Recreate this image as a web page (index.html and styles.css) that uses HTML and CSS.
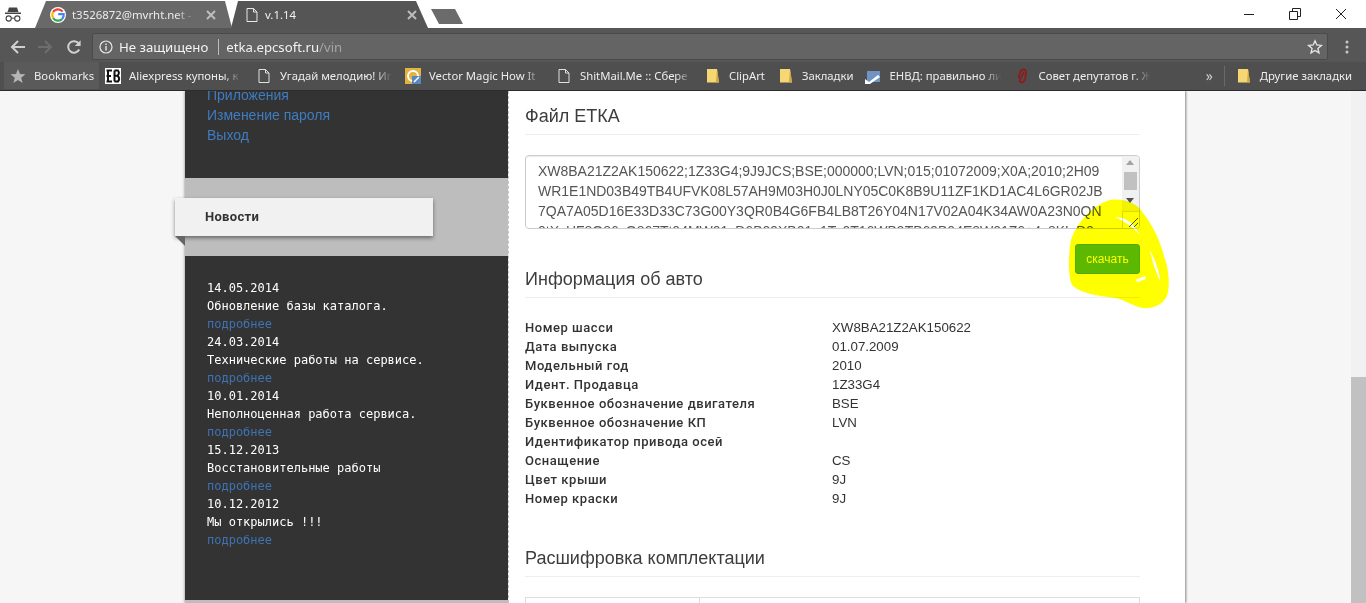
FILE: index.html
```html
<!DOCTYPE html>
<html lang="ru">
<head>
<meta charset="utf-8">
<title>v.1.14</title>
<link rel="stylesheet" href="styles.css">
</head>
<body>
<header class="chrome">
  <div class="tabstrip">
    <div class="incognito">
      <svg width="20" height="20" viewBox="0 0 20 20"><path d="M6 3.5 L14 3.5 L15.5 8 L4.5 8 Z" fill="#444"/><rect x="2" y="8.5" width="16" height="1.5" fill="#444"/><circle cx="5.7" cy="14.5" r="2.6" fill="none" stroke="#444" stroke-width="1.1"/><circle cx="14.3" cy="14.5" r="2.6" fill="none" stroke="#444" stroke-width="1.1"/><path d="M8.3 14.2 H11.7" stroke="#444"/></svg>
    </div>
    <div class="tab tab-back">
      <svg class="tab-ico" width="16" height="16" viewBox="0 0 16 16"><circle cx="8" cy="8" r="8" fill="#fff"/><path d="M12.6 4.6 A5.7 5.7 0 0 0 3.2 5" fill="none" stroke="#ea4335" stroke-width="2.2"/><path d="M3.2 5 A5.7 5.7 0 0 0 3.2 11" fill="none" stroke="#fbbc05" stroke-width="2.2"/><path d="M3.2 11 A5.7 5.7 0 0 0 12 12.1" fill="none" stroke="#34a853" stroke-width="2.2"/><path d="M12 12.1 A5.7 5.7 0 0 0 13.7 7.2 H8.2" fill="none" stroke="#4285f4" stroke-width="2.2"/></svg>
      <span class="tab-title">t3526872@mvrht.net - П</span>
      <svg class="tab-x" width="10" height="10" viewBox="0 0 10 10"><path d="M1 1 L9 9 M9 1 L1 9" stroke="#bdbdbd" stroke-width="2"/></svg>
    </div>
    <div class="tab tab-active">
      <svg class="tab-ico" width="16" height="16" viewBox="0 0 16 16"><path d="M3 1.5 H9.5 L13 5 V14.5 H3 Z M9.5 1.5 V5 H13" fill="none" stroke="#e8e8e8"/></svg>
      <span class="tab-title">v.1.14</span>
      <svg class="tab-x" width="10" height="10" viewBox="0 0 10 10"><path d="M1 1 L9 9 M9 1 L1 9" stroke="#bdbdbd" stroke-width="2"/></svg>
    </div>
    <div class="newtab"></div>
    <div class="winctl">
      <svg width="12" height="12" viewBox="0 0 12 12"><path d="M1 6.5 H11" stroke="#222"/></svg>
      <svg width="12" height="12" viewBox="0 0 12 12"><path d="M.5 3.5 H8.5 V11.5 H.5 Z M3.5 3.5 V.5 H11.5 V8.5 H8.5" fill="none" stroke="#222"/></svg>
      <svg width="12" height="12" viewBox="0 0 12 12"><path d="M1 1 L11 11 M11 1 L1 11" stroke="#222"/></svg>
    </div>
  </div>
  <div class="toolbar">
    <svg class="nav nav-back" width="16" height="16" viewBox="0 0 16 16"><path d="M15 8 H2 M8 2 L2 8 L8 14" fill="none" stroke="#d0d0d0" stroke-width="2"/></svg>
    <svg class="nav nav-fwd" width="16" height="16" viewBox="0 0 16 16"><path d="M1 8 H14 M8 2 L14 8 L8 14" fill="none" stroke="#6e6e6e" stroke-width="2"/></svg>
    <svg class="nav nav-rel" width="16" height="16" viewBox="0 0 16 16"><path d="M13.2 10.5 A5.8 5.8 0 1 1 12.6 4.4" fill="none" stroke="#d0d0d0" stroke-width="2"/><path d="M14.6 1.2 V7 H8.8 Z" fill="#d0d0d0"/></svg>
    <div class="omni">
      <svg class="info" width="14" height="14" viewBox="0 0 14 14"><circle cx="7" cy="7" r="6" fill="none" stroke="#e8e8e8" stroke-width="1.2"/><path d="M7 6 V10.5 M7 3.4 V5" stroke="#e8e8e8" stroke-width="1.4"/></svg>
      <span class="insecure">Не защищено</span>
      <span class="omni-sep"></span>
      <span class="url">etka.epcsoft.ru<span class="url-path">/vin</span></span>
      <svg class="omni-star" width="16" height="16" viewBox="0 0 16 16"><path d="M8 1.8 L9.8 6 L14.4 6.4 L10.9 9.4 L12 13.9 L8 11.5 L4 13.9 L5.1 9.4 L1.6 6.4 L6.2 6 Z" fill="none" stroke="#e8e8e8" stroke-width="1.3"/></svg>
    </div>
    <svg class="menu" width="4" height="14" viewBox="0 0 4 14"><circle cx="2" cy="2" r="1.5" fill="#c8c8c8"/><circle cx="2" cy="7" r="1.5" fill="#c8c8c8"/><circle cx="2" cy="12" r="1.5" fill="#c8c8c8"/></svg>
  </div>
  <nav class="bookmarks">
    <div class="bm-first">
      <svg width="16" height="16" viewBox="0 0 16 16"><path d="M8 1 L10 6 L15.4 6.3 L11.2 9.7 L12.6 15 L8 12 L3.4 15 L4.8 9.7 L.6 6.3 L6 6 Z" fill="#b5b5b5"/></svg>
      <span>Bookmarks</span>
    </div>
    <div class="bm">
      <svg width="16" height="16" viewBox="0 0 16 16"><rect width="16" height="16" fill="#fff"/><path d="M1.5 2.5 H7 M1.5 8 H6 M1.5 13.5 H7 M3 2.5 V13.5 M9.5 2.5 V13.5 M9.5 2.5 H13 Q15 5 12.5 7.8 H9.5 M12.5 7.8 Q15.5 10.5 13 13.5 H9.5" fill="none" stroke="#111" stroke-width="2"/></svg>
      <span class="bm-t">Aliexpress купоны, к</span>
    </div>
    <div class="bm">
      <svg width="16" height="16" viewBox="0 0 16 16"><path d="M3 1.5 H9.5 L13 5 V14.5 H3 Z M9.5 1.5 V5 H13" fill="none" stroke="#e0e0e0"/></svg>
      <span class="bm-t">Угадай мелодию! Иг</span>
    </div>
    <div class="bm">
      <svg width="16" height="16" viewBox="0 0 16 16"><rect width="16" height="16" fill="#e3b341"/><circle cx="8" cy="8" r="5" fill="none" stroke="#fff" stroke-width="2"/><path d="M7 8 H16 V16 H7 Z" fill="#5b87c0"/><path d="M9 14 L14 9" stroke="#fff" stroke-width="1.5"/></svg>
      <span class="bm-t">Vector Magic How It</span>
    </div>
    <div class="bm">
      <svg width="16" height="16" viewBox="0 0 16 16"><path d="M3 1.5 H9.5 L13 5 V14.5 H3 Z M9.5 1.5 V5 H13" fill="none" stroke="#e0e0e0"/></svg>
      <span class="bm-t">ShitMail.Me :: Сбере</span>
    </div>
    <div class="bm bm-auto">
      <svg width="16" height="16" viewBox="0 0 16 16"><path d="M2 1 H12 L14 14.5 H2 Z" fill="#f7d774"/><path d="M12 1 L14 14.5 H11 Z" fill="#cfa53e"/></svg>
      <span>ClipArt</span>
    </div>
    <div class="bm bm-auto">
      <svg width="16" height="16" viewBox="0 0 16 16"><path d="M2 1 H12 L14 14.5 H2 Z" fill="#f7d774"/><path d="M12 1 L14 14.5 H11 Z" fill="#cfa53e"/></svg>
      <span>Закладки</span>
    </div>
    <div class="bm bm-envd">
      <svg width="16" height="16" viewBox="0 0 16 16"><path d="M2 3 H15 V14 H2 Z" fill="#6f93c4"/><path d="M0 11 L4 14 L13 7 L15 9 L5 16 H0 Z" fill="#fff"/></svg>
      <span class="bm-t">ЕНВД: правильно ли</span>
    </div>
    <div class="bm bm-sovet">
      <svg width="16" height="16" viewBox="0 0 16 16"><path d="M10 4 L6 11.5 Q5 14 7.5 14.5 Q10 14.5 11 11 L12 5 Q12 1.5 9.5 1.5 Q7 1.5 6 5 L4.5 10" fill="none" stroke="#8c1c1c" stroke-width="1.8"/></svg>
      <span class="bm-t">Совет депутатов г. Ж</span>
    </div>
    <span class="bm-more">»</span>
    <span class="bm-sep"></span>
    <div class="bm bm-auto bm-other">
      <svg width="16" height="16" viewBox="0 0 16 16"><path d="M2 1 H12 L14 14.5 H2 Z" fill="#f7d774"/><path d="M12 1 L14 14.5 H11 Z" fill="#cfa53e"/></svg>
      <span>Другие закладки</span>
    </div>
  </nav>
</header>

<div class="viewport">
  <div class="page">
    <div class="container">
      <aside class="sidebar">
        <ul class="side-links">
          <li><a href="#">Приложения</a></li>
          <li><a href="#">Изменение пароля</a></li>
          <li><a href="#">Выход</a></li>
        </ul>
        <div class="band">
          <div class="ribbon">Новости</div>
        </div>
        <div class="news">
          <div>14.05.2014</div>
          <div>Обновление базы каталога.</div>
          <a href="#">подробнее</a>
          <div>24.03.2014</div>
          <div>Технические работы на сервисе.</div>
          <a href="#">подробнее</a>
          <div>10.01.2014</div>
          <div>Неполноценная работа сервиса.</div>
          <a href="#">подробнее</a>
          <div>15.12.2013</div>
          <div>Восстановительные работы</div>
          <a href="#">подробнее</a>
          <div>10.12.2012</div>
          <div>Мы открылись !!!</div>
          <a href="#">подробнее</a>
        </div>
        <div class="band-end"></div>
      </aside>
      <main class="content">
        <h3 class="title title-first">Файл ЕТКА</h3>
        <div class="filebox">
          <div class="filetext">XW8BA21Z2AK150622;1Z33G4;9J9JCS;BSE;000000;LVN;015;01072009;X0A;2010;2H09<br>WR1E1ND03B49TB4UFVK08L57AH9M03H0J0LNY05C0K8B9U11ZF1KD1AC4L6GR02JB<br>7QA7A05D16E33D33C73G00Y3QR0B4G6FB4LB8T26Y04N17V02A04K34AW0A23N0QN<br>0tXcHF8Q86cQ867Tt04MW01cD6B09XB01o1Ta0T16WB9TB69B04E8W01Z6+4c8KL D9</div>
          <div class="fbar">
            <span class="fbar-up"></span>
            <span class="fbar-thumb"></span>
            <span class="fbar-down"></span>
          </div>
          <div class="fgrip">
            <svg width="11" height="11" viewBox="0 0 11 11"><path d="M1 10 L10 1 M6 10 L10 6" stroke="#555"/></svg>
          </div>
        </div>
        <div class="dl-row"><button class="dl-btn" type="button">скачать</button></div>
        <h3 class="title">Информация об авто</h3>
        <dl class="facts">
          <div class="fact"><dt>Номер шасси</dt><dd>XW8BA21Z2AK150622</dd></div>
          <div class="fact"><dt>Дата выпуска</dt><dd>01.07.2009</dd></div>
          <div class="fact"><dt>Модельный год</dt><dd>2010</dd></div>
          <div class="fact"><dt>Идент. Продавца</dt><dd>1Z33G4</dd></div>
          <div class="fact"><dt>Буквенное обозначение двигателя</dt><dd>BSE</dd></div>
          <div class="fact"><dt>Буквенное обозначение КП</dt><dd>LVN</dd></div>
          <div class="fact"><dt>Идентификатор привода осей</dt><dd></dd></div>
          <div class="fact"><dt>Оснащение</dt><dd>CS</dd></div>
          <div class="fact"><dt>Цвет крыши</dt><dd>9J</dd></div>
          <div class="fact"><dt>Номер краски</dt><dd>9J</dd></div>
        </dl>
        <h3 class="title title-spaced">Расшифровка комплектации</h3>
        <div class="equip"><div class="equip-a"></div><div class="equip-b"></div></div>
        <svg class="scribble" width="110" height="118" viewBox="1065 195 110 118">
          <path fill="#ffff00" fill-rule="evenodd" d="M1110 200 C1125 198 1138 204 1143 213 C1152 224 1160 240 1164 256 C1170 272 1170 290 1166 298 C1160 307 1148 310 1138 307 C1130 304 1124 300 1116 298 C1100 296 1082 294 1073 286 C1068 280 1068 255 1071 240 C1077 222 1094 204 1110 200 Z M1115 217 C1125 217 1133 222 1140 235 C1134 228 1126 222 1115 217 Z M1150 250 C1155 260 1160 272 1160 281 C1156 272 1152 262 1150 250 Z M1135 280 L1145 276 L1146 279 L1138 282 Z"/>
        </svg>
      </main>
    </div>
  </div>
  <div class="pagebar"><span class="pagebar-thumb"></span></div>
</div>
</body>
</html>
```
FILE: styles.css
```css
* { box-sizing: border-box; }
html, body { margin: 0; padding: 0; height: 603px; overflow: hidden; }
body { display: flex; flex-direction: column; font-family: "Liberation Sans", Arial, sans-serif; background: #fff; color: #333; }

.chrome { flex: 0 0 91px; display: flex; flex-direction: column; font-family: "Noto Sans", "Open Sans", sans-serif; font-size: 11.3px; }
.tabstrip { flex: 0 0 28px; display: flex; align-items: flex-end; background: #fff; }
.incognito { flex: 0 0 35px; align-self: stretch; display: flex; align-items: center; padding-left: 3px; }
.tab { height: 27px; flex: 0 0 auto; display: flex; align-items: center; position: relative; font-size: 11.4px; }
.tab-back { width: 197px; padding-left: 15px; background: #696969; color: #ececec; clip-path: polygon(0 100%, 11px 0, 190px 0, 197px 100%); }
.tab-active { width: 197px; margin-left: -1px; padding-left: 13px; background: #555; color: #f0f0f0; clip-path: polygon(0 100%, 7px 0, 185px 0, 197px 100%); }
.tab-ico { flex: none; margin-right: 5px; }
.tab-back .tab-ico { margin-right: 6px; }
.tab-back .tab-title { width: 126px; white-space: nowrap; -webkit-mask-image: linear-gradient(90deg, #000 82%, transparent 98%); mask-image: linear-gradient(90deg, #000 82%, transparent 98%); }
.tab-active .tab-title { width: 140px; }
.tab-back .tab-x { margin-left: 8px; }
.tab-active .tab-x { margin-left: 2px; }
.newtab { width: 32px; height: 15px; margin: 0 0 4px 3px; background: #6b6b6b; clip-path: polygon(0 0, 24px 0, 32px 100%, 8px 100%); }
.winctl { margin-left: auto; align-self: stretch; display: flex; align-items: center; gap: 34px; padding: 0 19px 1px 0; }

.toolbar { flex: 0 0 34px; display: flex; align-items: center; padding-top: 3px; background: #565656; position: relative; }
.nav { flex: none; }
.nav-back { margin-left: 10px; }
.nav-fwd { margin-left: 11px; }
.nav-rel { margin-left: 13px; }
.omni { width: 1236px; height: 27px; margin-left: 10px; display: flex; align-items: center; background: #646464; border: 1px solid #4a4a4a; border-radius: 2px; font-size: 13.2px; color: #f2f2f2; }
.info { margin-left: 6px; flex: none; }
.insecure { margin-left: 6px; white-space: nowrap; }
.omni-sep { width: 1px; height: 16px; margin: 0 7px 0 10px; background: #bcbcbc; }
.url { white-space: nowrap; }
.url-path { color: #a5a5a5; }
.omni-star { margin-left: auto; margin-right: 4px; flex: none; }
.menu { margin-left: 17px; flex: none; }

.bookmarks { flex: 0 0 29px; display: flex; align-items: center; padding-bottom: 1px; background: #4f4f4f; border-bottom: 1px solid #2c2c2c; color: #ededed; white-space: nowrap; }
.bm-first { width: 95px; height: 27px; margin-left: 4px; padding-left: 6px; display: flex; align-items: center; gap: 8px; background: #5a5a5a; }
.bm { display: flex; align-items: center; gap: 8px; width: 136px; margin-left: 15px; flex: none; }
.bm:nth-child(2) { margin-left: 6px; }
.bm:nth-child(4) { margin-left: 13px; }
.bm-envd { margin-left: 12px; }
.bm-sovet { margin-left: 13px; }
.bm-t { width: 112px; white-space: nowrap; -webkit-mask-image: linear-gradient(90deg, #000 85%, transparent); mask-image: linear-gradient(90deg, #000 85%, transparent); }
.bm-auto { width: auto; margin-left: 13px; }
.bm-more { margin-left: auto; font-size: 14px; line-height: 14px; color: #cfcfcf; width: 18px; }
.bm-sep { width: 1px; height: 20px; background: #6a6a6a; margin-left: 0; }
.bm-other { margin: 0 14px 0 11px; }

.viewport { flex: 1 1 auto; min-height: 0; display: flex; overflow: hidden; }
.page { flex: 1 1 auto; min-width: 0; background: #f6f6f6; padding-left: 185px; }
.pagebar { flex: 0 0 15px; background: #f1f1f1; padding-top: 286px; }
.pagebar-thumb { display: block; height: 226px; background: #c1c1c1; }

.container { width: 1000px; height: 512px; display: flex; box-shadow: 0 0 3px #888, 1px 0 2px #aaa; background: #fff; }

.sidebar { flex: 0 0 324px; background: #333; background-clip: padding-box; border-right: 1px dashed #c4c4c4; display: flex; flex-direction: column; }
.side-links { list-style: none; margin: -6px 0 0; padding: 0 0 33px 22px; font-size: 14px; line-height: 20px; }
.side-links a { color: #3f7cc0; text-decoration: none; }
.band { height: 78px; flex: none; background: #bdbdbd; padding-top: 20px; position: relative; }
.ribbon { width: 258px; height: 38px; margin-left: -10px; padding-left: 30px; line-height: 37px; background: #f1f1f1; box-shadow: 0 2px 4px rgba(0,0,0,.45); color: #333; font-size: 13px; font-weight: 700; letter-spacing: .3px; font-family: "Roboto", "Liberation Sans", sans-serif; position: relative; }
.ribbon::after { content: ""; position: absolute; left: 0; top: 100%; border-top: 10px solid #666; border-left: 10px solid transparent; }
.news { flex: none; padding: 23px 0 51px 22px; font-family: "DejaVu Sans Mono", monospace; font-size: 12px; line-height: 18px; color: #fff; white-space: nowrap; }
.news a { display: block; color: #3f72b0; text-decoration: none; }
.band-end { flex: 1 1 auto; background: #bdbdbd; }

.content { flex: 1 1 auto; min-width: 0; padding: 0 45px 0 16px; position: relative; overflow: hidden; background: #fff; }
.title { margin: 0; padding-bottom: 8px; font-size: 18px; font-weight: 400; line-height: 20px; height: 29px; color: #3d3d3d; border-bottom: 1px solid #eee; }
.title-first { margin-top: 15px; }
.title-spaced { margin-top: 40px; }

.filebox { position: relative; height: 74px; margin-top: 20px; border: 1px solid #ccc; border-radius: 4px; box-shadow: inset 0 1px 1px rgba(0,0,0,.08); overflow: hidden; background: #fff; }
.filetext { padding: 5px 11px 0 12px; font-size: 14px; letter-spacing: -.015px; line-height: 20px; color: #555; white-space: nowrap; }
.fbar { position: absolute; top: 0; right: 0; width: 17px; height: 56px; background: #f1f1f1; }
.fbar-up { position: absolute; left: 4px; top: 4px; border: 4px solid transparent; border-top: 0; border-bottom: 5px solid #a3a3a3; }
.fbar-thumb { position: absolute; left: 2px; top: 16px; width: 13px; height: 18px; background: #c1c1c1; }
.fbar-down { position: absolute; left: 4px; top: 42px; border: 4px solid transparent; border-bottom: 0; border-top: 5px solid #505050; }
.fgrip { position: absolute; right: 0; bottom: 0; width: 17px; height: 17px; border: 1px solid #ddd; border-width: 1px 0 0 1px; background: #fff; display: flex; align-items: flex-end; justify-content: flex-end; }

.dl-row { height: 40px; padding-top: 15px; display: flex; justify-content: flex-end; }
.dl-btn { width: 65px; height: 30px; padding: 0; border: 1px solid #4cae4c; border-radius: 3px; background: #5cb85c; color: #fff; font: 12px "Liberation Sans", Arial, sans-serif; }

.facts { margin: 20px 0 0; font-size: 13.3px; line-height: 19px; }
.fact { display: grid; grid-template-columns: 307px 1fr; height: 19px; }
.fact dt { font-family: "Roboto", "Liberation Sans", sans-serif; font-size: 13px; font-weight: 500; letter-spacing: .54px; color: #333; white-space: nowrap; }
.fact dd { margin: 0; color: #333; }

.equip { display: flex; height: 40px; margin-top: 20px; border: 1px solid #ddd; border-bottom: 0; }
.equip-a { width: 174px; border-right: 1px solid #ddd; }
.equip-b { flex: 1; }

.scribble { position: absolute; left: 556px; top: 104px; mix-blend-mode: multiply; pointer-events: none; }
```
